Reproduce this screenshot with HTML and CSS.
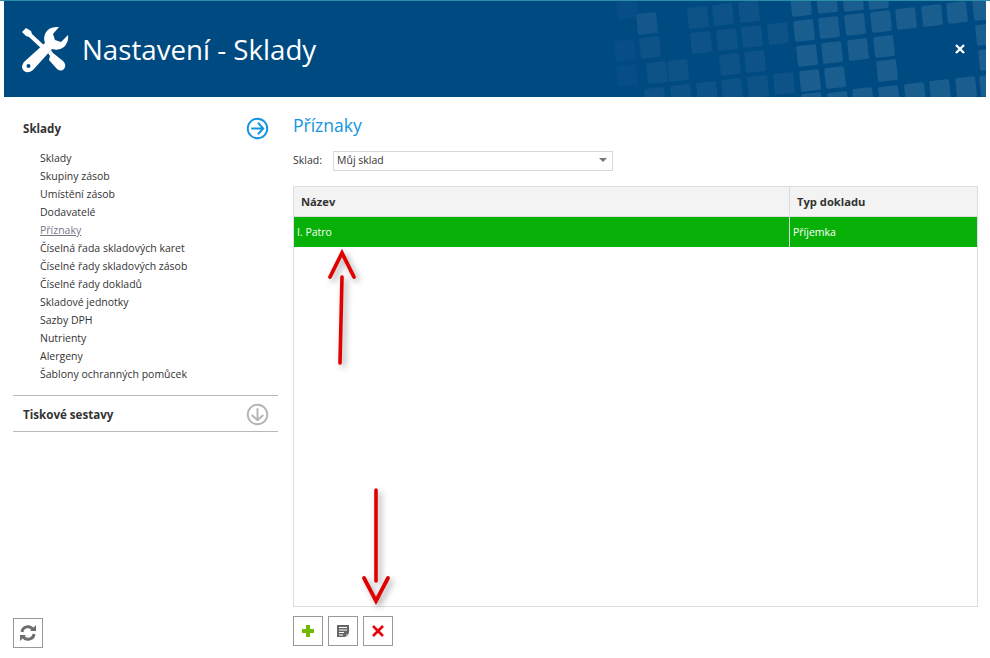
FILE: index.html
```html
<!DOCTYPE html>
<html lang="cs">
<head>
  <meta charset="UTF-8">
  <title>Nastavení - Sklady</title>
  <link rel="stylesheet" href="styles.css">
</head>
<body>
  <header class="header">
    <svg class="header-pattern" viewBox="-74 0 400 97" fill="#fff">
      <g opacity="0.025" transform="translate(0 -1)">
        <rect x="-43" y="-2" width="20" height="21" rx="2" transform="rotate(-6 -33 8)"/>
        <rect x="-23" y="13" width="20" height="21" rx="2" transform="rotate(-6 -13 23)"/>
        <rect x="-45" y="40" width="20" height="21" rx="2" transform="rotate(-6 -35 50)"/>
        <rect x="-43" y="65" width="20" height="21" rx="2" transform="rotate(-6 -33 75)"/>
      </g>
      <g opacity="0.05" transform="translate(0 -1)">
        <rect x="-23" y="13" width="20" height="21" rx="2" transform="rotate(-6 -13 23)"/>
        <rect x="-20" y="37" width="20" height="21" rx="2" transform="rotate(-6 -10 47)"/>
        <rect x="-13" y="62" width="20" height="21" rx="2" transform="rotate(-6 -3 72)"/>
        <rect x="-15" y="88" width="20" height="21" rx="2" transform="rotate(-6 -5 98)"/>
        <rect x="28" y="7" width="20" height="21" rx="2" transform="rotate(-6 38 17)"/>
        <rect x="53" y="4" width="20" height="21" rx="2" transform="rotate(-6 63 14)"/>
        <rect x="79" y="1" width="20" height="21" rx="2" transform="rotate(-6 89 11)"/>
        <rect x="31" y="32" width="20" height="21" rx="2" transform="rotate(-6 41 42)"/>
        <rect x="57" y="29" width="20" height="21" rx="2" transform="rotate(-6 67 39)"/>
        <rect x="82" y="26" width="20" height="21" rx="2" transform="rotate(-6 92 36)"/>
        <rect x="108" y="23" width="20" height="21" rx="2" transform="rotate(-6 118 33)"/>
        <rect x="60" y="54" width="20" height="21" rx="2" transform="rotate(-6 70 64)"/>
        <rect x="85" y="51" width="20" height="21" rx="2" transform="rotate(-6 95 61)"/>
        <rect x="8" y="60" width="20" height="21" rx="2" transform="rotate(-6 18 70)"/>
        <rect x="11" y="85" width="20" height="21" rx="2" transform="rotate(-6 21 95)"/>
        <rect x="37" y="82" width="20" height="21" rx="2" transform="rotate(-6 47 92)"/>
        <rect x="62" y="79" width="20" height="21" rx="2" transform="rotate(-6 72 89)"/>
        <rect x="88" y="76" width="20" height="21" rx="2" transform="rotate(-6 98 86)"/>
        <rect x="114" y="73" width="20" height="21" rx="2" transform="rotate(-6 124 83)"/>
      </g>
      <g opacity="0.1" transform="translate(0 -1)">
        <rect x="131" y="-5" width="20" height="21" rx="2" transform="rotate(-6 141 5)"/>
        <rect x="157" y="-8" width="20" height="21" rx="2" transform="rotate(-6 167 2)"/>
        <rect x="183" y="-10" width="20" height="21" rx="2" transform="rotate(-6 193 0)"/>
        <rect x="208" y="-12" width="20" height="21" rx="2" transform="rotate(-6 218 -2)"/>
        <rect x="134" y="20" width="20" height="21" rx="2" transform="rotate(-6 144 30)"/>
        <rect x="159" y="17" width="20" height="21" rx="2" transform="rotate(-6 169 27)"/>
        <rect x="185" y="14" width="20" height="21" rx="2" transform="rotate(-6 195 24)"/>
        <rect x="211" y="11" width="20" height="21" rx="2" transform="rotate(-6 221 21)"/>
        <rect x="236" y="8" width="20" height="21" rx="2" transform="rotate(-6 246 18)"/>
        <rect x="262" y="5" width="20" height="21" rx="2" transform="rotate(-6 272 15)"/>
        <rect x="287" y="2" width="20" height="21" rx="2" transform="rotate(-6 297 12)"/>
        <rect x="313" y="-1" width="20" height="21" rx="2" transform="rotate(-6 323 9)"/>
        <rect x="137" y="45" width="20" height="21" rx="2" transform="rotate(-6 147 55)"/>
        <rect x="162" y="42" width="20" height="21" rx="2" transform="rotate(-6 172 52)"/>
        <rect x="188" y="39" width="20" height="21" rx="2" transform="rotate(-6 198 49)"/>
        <rect x="214" y="36" width="20" height="21" rx="2" transform="rotate(-6 224 46)"/>
        <rect x="316" y="24" width="20" height="21" rx="2" transform="rotate(-6 326 34)"/>
        <rect x="140" y="70" width="20" height="21" rx="2" transform="rotate(-6 150 80)"/>
        <rect x="165" y="67" width="20" height="21" rx="2" transform="rotate(-6 175 77)"/>
        <rect x="217" y="60" width="20" height="21" rx="2" transform="rotate(-6 227 70)"/>
        <rect x="319" y="49" width="20" height="21" rx="2" transform="rotate(-6 329 59)"/>
        <rect x="142" y="93" width="20" height="21" rx="2" transform="rotate(-6 152 103)"/>
        <rect x="168" y="92" width="20" height="21" rx="2" transform="rotate(-6 178 102)"/>
        <rect x="193" y="88" width="20" height="21" rx="2" transform="rotate(-6 203 98)"/>
        <rect x="219" y="86" width="20" height="21" rx="2" transform="rotate(-6 229 96)"/>
        <rect x="245" y="83" width="20" height="21" rx="2" transform="rotate(-6 255 93)"/>
        <rect x="270" y="80" width="20" height="21" rx="2" transform="rotate(-6 280 90)"/>
        <rect x="296" y="77" width="20" height="21" rx="2" transform="rotate(-6 306 87)"/>
        <rect x="320" y="75" width="20" height="21" rx="2" transform="rotate(-6 330 85)"/>
      </g>
    </svg>
    <svg class="header-icon" viewBox="0 0 48 48" fill="#fff">
      <path d="M1 7 L5 3 L10 6 L11 9 L25 22 L22 25 L8 12 L5 11 Z"/>
      <path d="M27 28 L30 25 L32 28 L42 36 Q46 40 43 44 Q40 47 36 44 L28 35 L29 31 Z"/>
      <path d="M38 2 Q28 1 24.5 8 Q22 13 24 18 L3 37 Q-1 42 3 46 Q7 49 12 45 L31 24 Q38 26 43 22 Q48 17 47 10 L40 17 L34 15 L32 9 Z"/>
      <circle cx="7.5" cy="41" r="2" fill="#004a82"/>
    </svg>
    <h1 class="header-title">Nastavení - Sklady</h1>
    <svg class="header-close" viewBox="0 0 10 10">
      <path d="M1 1 L9 9 M9 1 L1 9" stroke="#fff" stroke-width="2.4"/>
    </svg>
  </header>

  <div class="content">
    <aside class="sidebar">
      <div class="section-head section-open">
        <span>Sklady</span>
        <svg class="round-icon" viewBox="0 0 24 24" fill="none" stroke="#1295e0" stroke-width="2">
          <circle cx="12" cy="12" r="10.2"/>
          <path d="M5.5 12 H18 M12.5 6 L18 12 L12.5 18"/>
        </svg>
      </div>
      <ul class="menu">
        <li>Sklady</li>
        <li>Skupiny zásob</li>
        <li>Umístění zásob</li>
        <li>Dodavatelé</li>
        <li class="menu-active">Příznaky</li>
        <li>Číselná řada skladových karet</li>
        <li>Číselné řady skladových zásob</li>
        <li>Číselné řady dokladů</li>
        <li>Skladové jednotky</li>
        <li>Sazby DPH</li>
        <li>Nutrienty</li>
        <li>Alergeny</li>
        <li>Šablony ochranných pomůcek</li>
      </ul>
      <div class="section-head section-closed">
        <span>Tiskové sestavy</span>
        <svg class="round-icon" viewBox="0 0 24 24" fill="none" stroke="#b5b5b5" stroke-width="2">
          <circle cx="12" cy="12" r="10.2"/>
          <path d="M12 5.5 V18 M6 12.5 L12 18 L18 12.5"/>
        </svg>
      </div>
      <div class="sidebar-foot">
        <button class="icon-btn">
          <svg viewBox="0 0 18 18" width="18" height="18" fill="none" stroke="#6e6e6e" stroke-width="3">
            <path d="M3 8 A6 6 0 0 1 14 5.5"/>
            <path d="M15 10 A6 6 0 0 1 4 12.5"/>
            <path d="M11 7 H17 V1 Z M7 11 H1 V17 Z" fill="#6e6e6e" stroke="none"/>
          </svg>
        </button>
      </div>
    </aside>

    <main class="main">
      <h2 class="page-title">Příznaky</h2>
      <div class="filter">
        <label class="filter-label">Sklad:</label>
        <div class="select">
          <span>Můj sklad</span>
          <i class="select-arrow"></i>
        </div>
      </div>

      <div class="grid">
        <div class="grid-row grid-head">
          <div class="cell cell-name">Název</div>
          <div class="cell cell-type">Typ dokladu</div>
        </div>
        <div class="grid-row grid-selected">
          <div class="cell cell-name">I. Patro</div>
          <div class="cell cell-type">Příjemka</div>
        </div>
      </div>

      <div class="toolbar">
        <button class="icon-btn">
          <svg viewBox="0 0 12 12" width="12" height="12">
            <path d="M4 0 H8 V4 H12 V8 H8 V12 H4 V8 H0 V4 H4 Z" fill="#74b800"/>
          </svg>
        </button>
        <button class="icon-btn">
          <svg viewBox="0 0 12 12" width="12" height="12">
            <path d="M0 0 H12 V8 L8 12 H0 Z" fill="#666"/>
            <path d="M2 2.5 H10 M2 5 H10 M2 7.5 H7 M2 10 H6" stroke="#fff" stroke-width="1"/>
            <path d="M9 9 H12 L9 12 Z" fill="#999"/>
          </svg>
        </button>
        <button class="icon-btn">
          <svg viewBox="0 0 12 12" width="12" height="12">
            <path d="M1 1 L11 11 M11 1 L1 11" stroke="#e8000b" stroke-width="2.6"/>
          </svg>
        </button>
      </div>
    </main>

    <svg class="arrow arrow-up" viewBox="0 0 50 120" fill="none" stroke="#e00000" stroke-linecap="round">
      <path d="M14 115 L16 29" stroke-width="3.6"/>
      <path d="M4 29 L16 5 L28 29" stroke-width="3.8"/>
    </svg>
    <svg class="arrow arrow-down" viewBox="0 0 50 124" fill="none" stroke="#e00000" stroke-linecap="round">
      <path d="M16 3 L16 94" stroke-width="3.6"/>
      <path d="M4 91 L16 114 L28 91" stroke-width="3.8"/>
    </svg>
  </div>
</body>
</html>
```

FILE: styles.css
```css
* {
  box-sizing: border-box;
}

html,
body {
  height: 100%;
}

body {
  margin: 0;
  background-color: #fff;
  border-top: 1px solid #2a8fa8;
  color: #333;
  font-family: "Open Sans", "Noto Sans", sans-serif;
  font-size: 10.5px;
  overflow: hidden;
}

.header {
  position: relative;
  display: flex;
  align-items: center;
  height: 96px;
  margin: 0 4px;
  padding: 0 21px 0 17px;
  background-color: #004a82;
  overflow: hidden;
}

.header-pattern {
  position: absolute;
  top: 0;
  right: 0;
  width: 400px;
  height: 97px;
}

.header-icon {
  width: 48px;
  height: 48px;
  margin-right: 13px;
}

.header-title {
  margin: 0;
  color: #fff;
  font-size: 27.7px;
  font-weight: 400;
}

.header-close {
  position: relative;
  width: 10px;
  height: 10px;
  margin-left: auto;
}

.content {
  position: relative;
  display: flex;
  height: 561px;
  padding: 0 13px;
}

.sidebar {
  display: flex;
  flex-direction: column;
  width: 265px;
  padding-bottom: 10px;
}

.section-head {
  display: flex;
  align-items: center;
  justify-content: space-between;
  padding: 0 10px;
  font-size: 11.6px;
  font-weight: 700;
}

.section-open {
  height: 36px;
  margin-top: 13px;
}

.section-closed {
  height: 37px;
  padding-top: 2px;
  border-top: 1px solid #b8b8b8;
  border-bottom: 1px solid #b8b8b8;
}

.round-icon {
  width: 23px;
  height: 23px;
  margin-right: -1px;
}

.menu {
  margin: 0 0 12px;
  padding: 3px 0 0 27px;
  list-style: none;
}

.menu li {
  height: 18px;
  line-height: 18px;
  white-space: nowrap;
}

.menu-active {
  color: #77778a;
  text-decoration: underline;
}

.sidebar-foot {
  margin-top: auto;
}

.icon-btn {
  display: flex;
  align-items: center;
  justify-content: center;
  width: 30px;
  height: 30px;
  padding: 0;
  background-color: #fff;
  border: 1px solid #999;
}

.main {
  display: flex;
  flex: 1;
  flex-direction: column;
  margin-left: 15px;
  margin-right: -1px;
  padding-bottom: 12px;
}

.page-title {
  margin: 14px 0 12px;
  color: #1295e0;
  font-size: 17.5px;
  font-weight: 400;
  line-height: 28px;
}

.filter {
  display: flex;
  align-items: center;
  margin-bottom: 15px;
}

.filter-label {
  width: 40px;
  padding-bottom: 2px;
}

.select {
  display: flex;
  align-items: center;
  justify-content: space-between;
  width: 280px;
  height: 20px;
  padding: 0 3px 2px;
  border: 1px solid #d8d8d8;
}

.select-arrow {
  width: 0;
  height: 0;
  margin-right: 2px;
  border-top: 4px solid #777;
  border-left: 4px solid transparent;
  border-right: 4px solid transparent;
}

.grid {
  flex: 1;
  border: 1px solid #dcdcdc;
}

.grid-row {
  display: flex;
}

.grid-head {
  height: 30px;
  padding-bottom: 1px;
  background-color: #f3f3f3;
  border-bottom: 1px solid #dcdcdc;
  font-size: 11.2px;
  font-weight: 700;
}

.grid-selected {
  height: 30px;
  background-color: #07b107;
  color: #fff;
}

.cell {
  display: flex;
  align-items: center;
}

.cell-name {
  width: 496px;
  border-right: 1px solid #dcdcdc;
}

.cell-type {
  flex: 1;
}

.grid-head .cell {
  padding-left: 7px;
}

.grid-selected .cell {
  padding-left: 3px;
  padding-bottom: 1px;
}

.toolbar {
  display: flex;
  gap: 5px;
  margin-top: 9px;
}

.arrow {
  position: absolute;
  filter: drop-shadow(3px 3px 3px rgba(0, 0, 0, 0.35));
}

.arrow-up {
  left: 326px;
  top: 151px;
  width: 50px;
  height: 120px;
}

.arrow-down {
  left: 360px;
  top: 390px;
  width: 50px;
  height: 124px;
}
```
